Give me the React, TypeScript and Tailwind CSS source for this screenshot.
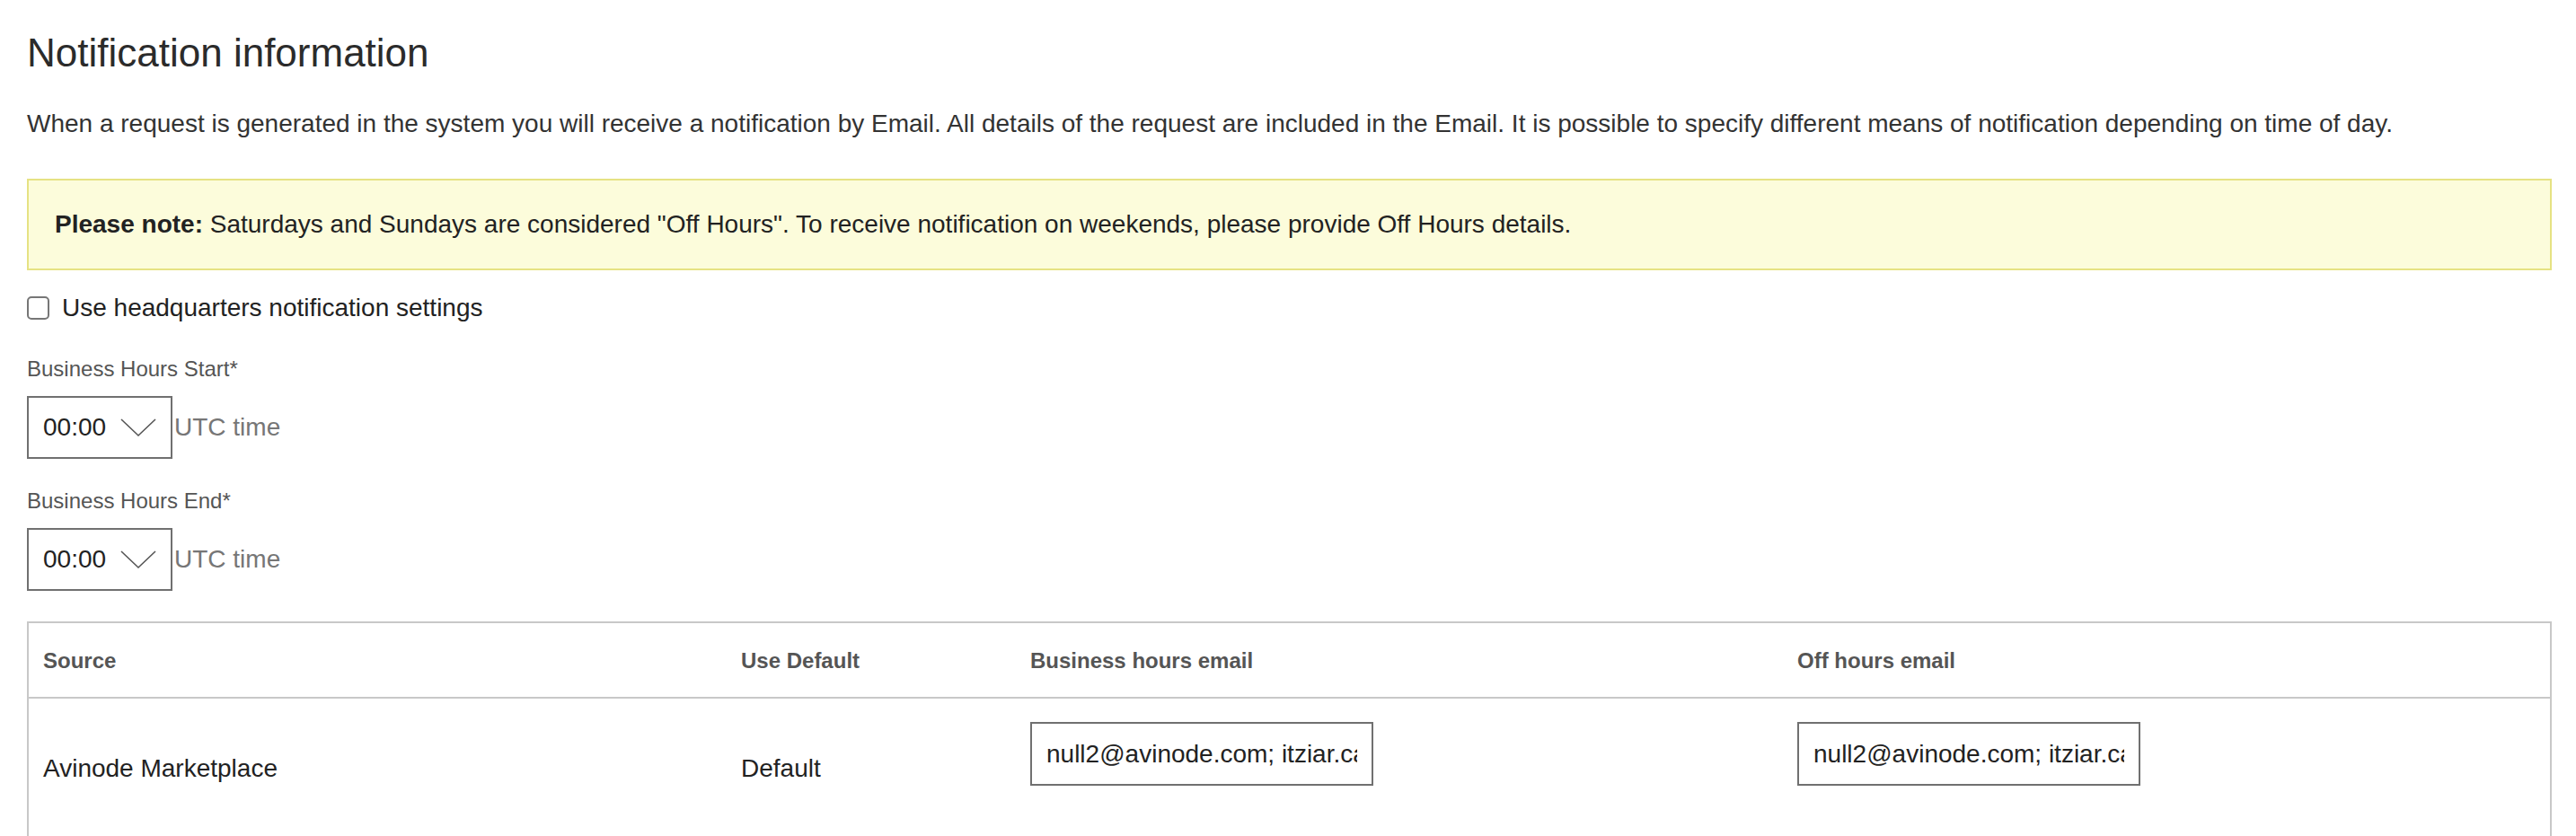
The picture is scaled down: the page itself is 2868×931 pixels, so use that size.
import { useState } from 'react';

const font = { fontFamily: '"Liberation Sans", Arial, Helvetica, sans-serif' };

function TimeSelect({ label }: { label: string }) {
  return (
    <div className="flex flex-col">
      <label className="text-[24px] leading-[28px] text-[#555]">{label}</label>
      <div className="mt-[16px] flex items-center">
        <div className="flex h-[70px] w-[162px] items-center justify-between border-2 border-[#707070] bg-white px-[16px] text-[28px] leading-[32px] text-[#222]">
          <span>00:00</span>
          <svg width="40" height="22" viewBox="0 0 40 22" fill="none">
            <polyline points="1,2 20,20 39,2" stroke="#555" strokeWidth="1.6" />
          </svg>
        </div>
        <span className="ml-[2px] text-[28px] leading-[32px] text-[#767676]">UTC time</span>
      </div>
    </div>
  );
}

function EmailInput({ value }: { value: string }) {
  return (
    <div className="flex flex-col">
      <input
        readOnly
        value={value}
        className="h-[71px] w-[382px] border-2 border-[#707070] bg-white px-[16px] text-[28px] text-[#222] outline-none"
        style={font}
      />
      {/* room for validation message */}
      <div className="h-[33px]" />
    </div>
  );
}

export default function App() {
  const [useHq, setUseHq] = useState(false);
  const emails = 'null2@avinode.com; itziar.casado@avinode.com';

  return (
    <div className="min-h-screen bg-white pl-[30px] pr-[27px] pt-[34px] text-[#333]" style={font}>
      <h1 className="text-[44px] leading-[50px] font-normal text-[#2b2b2b]">Notification information</h1>

      <p className="mt-[38px] text-[28px] leading-[32px]">
        When a request is generated in the system you will receive a notification by Email. All details of the request
        are included in the Email. It is possible to specify different means of notification depending on time of day.
      </p>

      <div className="mt-[45px] border-2 border-[#e6e283] bg-[#fcfcdb] px-[29px] pt-[33px] pb-[33px] text-[28px] leading-[32px] text-[#222]">
        <b className="font-bold">Please note:</b> Saturdays and Sundays are considered "Off Hours". To receive
        notification on weekends, please provide Off Hours details.
      </div>

      <label className="mt-[26px] flex items-center gap-[14px] text-[28px] leading-[32px] text-[#222]">
        <input
          type="checkbox"
          checked={useHq}
          onChange={(e) => setUseHq(e.target.checked)}
          className="m-0 h-[26px] w-[25px] appearance-none rounded-[5px] border-2 border-[#767676] bg-white"
        />
        Use headquarters notification settings
      </label>

      <div className="mt-[38px]">
        <TimeSelect label="Business Hours Start*" />
      </div>
      <div className="mt-[33px]">
        <TimeSelect label="Business Hours End*" />
      </div>

      <div className="mt-[34px] border-2 border-[#c8c8c8]">
        <div className="grid grid-cols-[777px_322px_854px_1fr] border-b-2 border-[#c8c8c8] pt-[28px] pb-[26px] text-[24px] leading-[28px] font-bold text-[#555]">
          <div className="px-[16px]">Source</div>
          <div className="px-[16px]">Use Default</div>
          <div className="px-[16px]">Business hours email</div>
          <div className="px-[16px]">Off hours email</div>
        </div>
        <div className="grid grid-cols-[777px_322px_854px_1fr] items-center py-[26px] text-[28px] leading-[32px] text-[#222]">
          <div className="px-[16px]">Avinode Marketplace</div>
          <div className="px-[16px]">Default</div>
          <div className="px-[16px]">
            <EmailInput value={emails} />
          </div>
          <div className="px-[16px]">
            <EmailInput value={emails} />
          </div>
        </div>
      </div>
    </div>
  );
}
